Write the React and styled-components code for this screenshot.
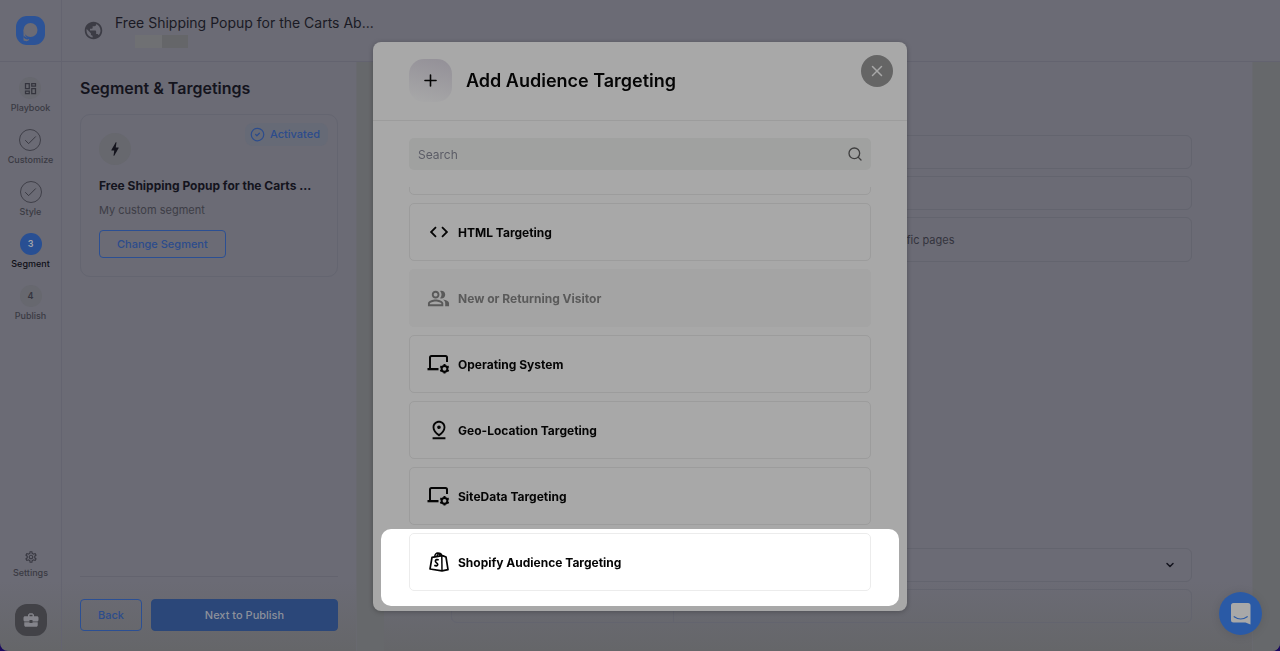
import React from 'react'
import styled, { createGlobalStyle } from 'styled-components'
import {
  MdBolt,
  MdBusinessCenter,
  MdCode,
  MdOutlineDashboard,
  MdOutlinePeopleAlt,
  MdOutlinePinDrop,
  MdOutlineSettings,
  MdPublic
} from 'react-icons/md'
import { Check, ChevronDown, CircleCheck, Plus, Search, X } from 'lucide-react'

const GlobalStyle = createGlobalStyle`
  * {
    box-sizing: border-box;
  }

  body {
    margin: 0;
    background: #1a0a5e;
    font-family: Inter, 'Liberation Sans', sans-serif;
    color: #14141d;
  }

  button, input, select {
    font-family: inherit;
  }
`

const Page = styled.div`
  display: grid;
  grid-template-columns: 62px 1fr;
  grid-template-rows: 62px 1fr;
  min-height: 100vh;
  background: linear-gradient(to bottom, #6b6b75 calc(100% - 70px), #656669 100%);
  border-radius: 0 0 8px 8px;
  overflow: hidden;
`

const LogoCell = styled.div`
  display: flex;
  align-items: center;
  justify-content: center;
  border-right: 1px solid #646470;
  border-bottom: 1px solid #63636f;
`

const Header = styled.header`
  display: flex;
  align-items: center;
  gap: 11px;
  padding: 0 21px;
  border-bottom: 1px solid #63636f;
  color: #3c3c45;
`

const HeaderText = styled.div`
  display: flex;
  flex-direction: column;
  gap: 2px;
`

const PageName = styled.div`
  font-size: 14px;
  line-height: 20px;
  color: #1a1a24;
`

const Domain = styled.div`
  width: 53px;
  height: 13px;
  margin-left: 20px;
  background: linear-gradient(to right, #6f7073 50%, #656669 50%);
`

const Rail = styled.nav`
  display: flex;
  flex-direction: column;
  align-items: center;
  gap: 15px;
  padding: 15px 0;
  border-right: 1px solid #646470;
`

const RailItem = styled.a`
  display: flex;
  flex-direction: column;
  align-items: center;
  gap: 3px;
  margin-top: ${props => (props.$last ? 'auto' : '0')};
  font-size: 9px;
  line-height: 12px;
  font-weight: 500;
  text-decoration: none;
  color: ${props => (props.$active ? '#0e0e16' : '#3a3a43')};
`

const Step = styled.span`
  display: flex;
  align-items: center;
  justify-content: center;
  width: 22px;
  height: 22px;
  border-radius: 50%;
  font-weight: 600;
  border: 1px solid ${props => (props.$done ? '#3f3f48' : 'transparent')};
  background: ${props => (props.$active ? '#284f93' : props.$soft ? '#67686f' : 'none')};
  color: ${props => (props.$active ? '#a3a5ab' : '#35353e')};
`

const HelpButton = styled.button`
  display: flex;
  align-items: center;
  justify-content: center;
  width: 32px;
  height: 32px;
  margin-top: 10px;
  padding: 0;
  border: 0;
  border-radius: 12px;
  background: #424247;
  color: #84848b;
`

const Body = styled.div`
  display: grid;
  grid-template-columns: 294px 28px 1fr 28px;
`

const Gutter = styled.div`
  background: #66686b;
  border-left: 1px solid #68696f;
`

const Sidebar = styled.aside`
  display: flex;
  flex-direction: column;
  padding: 16px 18px 20px;
`

const SidebarTitle = styled.h1`
  margin: 0 0 16px;
  font-size: 16px;
  line-height: 20px;
  font-weight: 600;
`

const SegmentCard = styled.section`
  display: flex;
  flex-direction: column;
  align-items: flex-start;
  padding: 8px 9px 18px 18px;
  border: 1px solid #646570;
  border-radius: 10px;
`

const CardTop = styled.div`
  display: flex;
  justify-content: space-between;
  align-items: flex-start;
  width: 100%;
`

const BoltCircle = styled.span`
  display: flex;
  align-items: center;
  justify-content: center;
  width: 32px;
  height: 32px;
  margin-top: 10px;
  border-radius: 50%;
  background: #67686e;
`

const Status = styled.span`
  display: flex;
  align-items: center;
  gap: 5px;
  padding: 0 8px 0 5px;
  border-radius: 8px;
  background: #666a76;
  color: #2c4c8c;
  font-size: 11px;
  line-height: 23px;
  font-weight: 500;
`

const CardTitle = styled.h2`
  margin: 12px 0 7px;
  font-size: 12px;
  line-height: 18px;
  font-weight: 700;
`

const CardText = styled.p`
  margin: 0 0 12px;
  font-size: 11px;
  line-height: 16px;
  color: #3d3d46;
`

const Button = styled.button`
  flex: ${props => (props.$grow ? '1' : 'none')};
  height: ${props => (props.$small ? '28px' : '32px')};
  padding: 0 17px;
  border: 1px solid ${props => (props.$primary ? '#2b4779' : '#2b4f93')};
  border-radius: 4px;
  background: ${props => (props.$primary ? '#2b4779' : 'none')};
  color: ${props => (props.$primary ? '#8d919b' : '#2c4c8c')};
  font-size: 11px;
  font-weight: 500;
`

const SidebarFooter = styled.div`
  display: flex;
  gap: 9px;
  margin-top: auto;
  padding-top: 22px;
  border-top: 1px solid #63636e;
`

const Main = styled.main`
  display: flex;
  flex-direction: column;
  gap: 7px;
  padding: 73px 60px 28px 67px;
`

const Field = styled.div`
  display: flex;
  align-items: center;
  height: ${props => (props.$tall ? '45px' : '34px')};
  border: 1px solid #63646e;
  border-radius: 6px;
`

const RuleText = styled.span`
  width: 68%;
  text-align: right;
  font-size: 11px;
  color: #33333d;
`

const SelectField = styled(Field)`
  margin-top: auto;
  padding-right: 15px;
`

const Select = styled.select`
  flex: 1;
  height: 100%;
  border: 0;
  background: none;
  appearance: none;
`

const FieldCell = styled.div`
  width: 30%;
  height: 100%;
  border-right: 1px solid #63646e;
`

const Overlay = styled.div`
  position: fixed;
  inset: 0;
  display: flex;
  align-items: center;
  justify-content: center;
  padding-top: 2px;
`

const Modal = styled.div`
  position: relative;
  display: flex;
  flex-direction: column;
  width: 534px;
  height: calc(100vh - 82px);
  border-radius: 8px;
  background: #a8a8a8;
  color: #050505;
  box-shadow: 0 1px 5px rgba(0, 0, 0, 0.25);
  overflow: hidden;
`

const ModalHeader = styled.div`
  display: flex;
  align-items: center;
  gap: 14px;
  padding: 17px 36px 18px;
  border-bottom: 1px solid #9c9c9c;
`

const PlusTile = styled.span`
  display: flex;
  align-items: center;
  justify-content: center;
  width: 43px;
  height: 43px;
  border-radius: 15px;
  background: linear-gradient(15deg, #a6a6a7 10%, #959299 90%);
`

const ModalTitle = styled.h2`
  margin: 0;
  font-size: 18px;
  line-height: 24px;
  font-weight: 600;
`

const CloseButton = styled.button`
  position: absolute;
  top: 13px;
  right: 14px;
  display: flex;
  align-items: center;
  justify-content: center;
  width: 32px;
  height: 32px;
  padding: 0;
  border: 0;
  border-radius: 50%;
  background: #656565;
  color: #a8a8a8;
`

const SearchBox = styled.label`
  display: flex;
  align-items: center;
  height: 32px;
  margin: 17px 36px;
  padding: 0 8px 0 9px;
  border-radius: 5px;
  background: #a0a1a0;
  color: #3f3f3f;
`

const SearchInput = styled.input`
  flex: 1;
  padding: 0;
  border: 0;
  outline: 0;
  background: none;
  font-size: 12px;

  &::placeholder {
    color: #5b5c66;
    opacity: 1;
  }
`

const TargetList = styled.ul`
  display: flex;
  flex: 1;
  flex-direction: column;
  justify-content: flex-end;
  gap: 8px;
  margin: 0;
  padding: 0 36px 5px;
  min-height: 0;
  overflow: hidden;
  list-style: none;
`

const TargetItem = styled.li`
  flex: none;
  ${props => props.$spotlight && `
    margin: -4px -28px 0;
    padding: 4px 28px 15px;
    border-radius: 10px;
    background: #fff;
  `}
`

const TargetButton = styled.button`
  display: flex;
  align-items: center;
  gap: 8px;
  width: 100%;
  height: 58px;
  padding: 0 17px;
  border: 1px solid ${props => (props.$spotlight ? '#ececec' : '#9c9c9c')};
  border-radius: 5px;
  background: none;
  color: #050505;
  font-size: 12px;
  font-weight: 700;
  text-align: left;

  &:disabled {
    border-color: #a4a4a4;
    background: #a4a4a4;
    color: #5a5a5a;
  }
`

const IconSlot = styled.span`
  display: flex;
  align-items: center;
  justify-content: center;
  width: 23px;
`

const ChatButton = styled.button`
  position: fixed;
  right: 18px;
  bottom: 16px;
  display: flex;
  align-items: center;
  justify-content: center;
  width: 43px;
  height: 43px;
  padding: 0;
  border: 0;
  border-radius: 50%;
  background: #2a5aa6;
  box-shadow: 0 1px 10px rgba(0, 0, 0, 0.1);
`

const Logo = () => (
  <svg width="29" height="29" viewBox="0 0 29 29" aria-hidden="true">
    <rect width="29" height="29" rx="11" fill="#2c5397" />
    <circle cx="14.5" cy="14" r="7" fill="#6b6b75" />
    <path d="M7.5 13v11.5l3 .8c1-.3 2-.8 2.8-1.500L9.500 20z" fill="#6b6b75" />
    <path d="M7.5 19.5c1.500 1.600 3.500 2.500 5.800 2.700l-1.500 1.400c-2-.3-3.500-1.300-4.300-2.400z" fill="#2c5397" />
  </svg>
)

const LaptopGear = () => (
  <svg width="23" height="20" viewBox="0 0 23 20" aria-hidden="true">
    <path d="M3 14V3.500Q3 2 4.500 2H18.500Q20 2 20 3.500V8" fill="none" stroke="currentColor" strokeWidth="2" />
    <path d="M.5 14h11v2.300H.5z" fill="currentColor" />
    <circle cx="17.500" cy="14.800" r="2.900" fill="none" stroke="currentColor" strokeWidth="2" />
    <path
      d="M17.500 10v1.800M17.500 17.800v1.800M13.300 12.400l1.600.9M20.100 16.300l1.600.9M13.300 17.200l1.600-.9M20.100 13.300l1.600-.9"
      stroke="currentColor"
      strokeWidth="2"
    />
  </svg>
)

const ShopifyBag = () => (
  <svg width="20" height="20" viewBox="0 0 20 20" fill="none" stroke="currentColor" aria-hidden="true">
    <path d="M3 5.300 13.500 3.600 17 5l2 12.600-6 1.300L1 17z" strokeWidth="1.700" strokeLinejoin="round" />
    <path d="M12.800 3.800 13 18.700" strokeWidth="1.500" />
    <path d="M5.600 5C6 2.500 7.500 1 9 1.100c1.300.1 2 1.300 2.100 2.900M8 4.500C8.500 2.200 10 1 11.300 1.400c.8.300 1.300 1.100 1.400 2.300" strokeWidth="1.500" />
    <path d="M9.700 7.900C8.300 7.200 6.500 7.600 6.400 9.100c-.1 1.700 2.500 1.800 2.300 3.500-.2 1.500-1.900 1.600-3.400.7" strokeWidth="1.700" />
  </svg>
)

const ChatIcon = () => (
  <svg width="20" height="22" viewBox="0 0 20 22" aria-hidden="true">
    <path d="M2.500 0h14.500Q19.500 0 19.500 2.500V21.500L14.500 19.500H2.500Q0 19.500 0 17V2.500Q0 0 2.500 0z" fill="#a8a8a8" />
    <path d="M3.200 13.700q6.500 4.600 13 0" fill="none" stroke="#2a5aa6" strokeWidth="1.200" strokeLinecap="round" />
  </svg>
)

const steps = [
  { label: 'Playbook', icon: <MdOutlineDashboard size={15} />, soft: true },
  { label: 'Customize', icon: <Check size={15} strokeWidth={1.5} />, done: true },
  { label: 'Style', icon: <Check size={15} strokeWidth={1.5} />, done: true },
  { label: 'Segment', icon: '3', active: true },
  { label: 'Publish', icon: '4', soft: true }
]

const targets = [
  { name: 'HTML Targeting', icon: <MdCode size={22} /> },
  { name: 'New or Returning Visitor', icon: <MdOutlinePeopleAlt size={23} />, disabled: true },
  { name: 'Operating System', icon: <LaptopGear /> },
  { name: 'Geo-Location Targeting', icon: <MdOutlinePinDrop size={22} /> },
  { name: 'SiteData Targeting', icon: <LaptopGear /> },
  { name: 'Shopify Audience Targeting', icon: <ShopifyBag />, spotlight: true }
]

const App = () => {
  return (
    <>
      <GlobalStyle />
      <Page>
        <LogoCell><Logo /></LogoCell>
        <Header>
          <MdPublic size={21} />
          <HeaderText>
            <PageName>Free Shipping Popup for the Carts Ab...</PageName>
            <Domain />
          </HeaderText>
        </Header>
        <Rail>
          {steps.map(({ label, icon, done, active, soft }) => (
            <RailItem href="#" key={label} $active={active}>
              <Step $done={done} $active={active} $soft={soft}>{icon}</Step>
              {label}
            </RailItem>
          ))}
          <RailItem href="#" $last>
            <MdOutlineSettings size={14} />
            Settings
          </RailItem>
          <HelpButton aria-label="Toolbox"><MdBusinessCenter size={18} /></HelpButton>
        </Rail>
        <Body>
          <Sidebar>
            <SidebarTitle>Segment &amp; Targetings</SidebarTitle>
            <SegmentCard>
              <CardTop>
                <BoltCircle><MdBolt size={18} /></BoltCircle>
                <Status><CircleCheck size={15} strokeWidth={2} /> Activated</Status>
              </CardTop>
              <CardTitle>Free Shipping Popup for the Carts ...</CardTitle>
              <CardText>My custom segment</CardText>
              <Button $small>Change Segment</Button>
            </SegmentCard>
            <SidebarFooter>
              <Button>Back</Button>
              <Button $primary $grow>Next to Publish</Button>
            </SidebarFooter>
          </Sidebar>
          <Gutter />
          <Main>
            <Field />
            <Field />
            <Field $tall><RuleText>specific pages</RuleText></Field>
            <SelectField>
              <Select aria-label="Condition" />
              <ChevronDown size={12} strokeWidth={3} />
            </SelectField>
            <Field><FieldCell /></Field>
          </Main>
          <Gutter />
        </Body>
      </Page>
      <Overlay>
        <Modal role="dialog" aria-labelledby="modal-title">
          <ModalHeader>
            <PlusTile><Plus size={19} strokeWidth={2} /></PlusTile>
            <ModalTitle id="modal-title">Add Audience Targeting</ModalTitle>
          </ModalHeader>
          <CloseButton aria-label="Close"><X size={18} strokeWidth={2} /></CloseButton>
          <SearchBox>
            <SearchInput type="text" placeholder="Search" aria-label="Search" />
            <Search size={16} strokeWidth={2} />
          </SearchBox>
          <TargetList>
            <TargetItem><TargetButton as="div" /></TargetItem>
            {targets.map(({ name, icon, disabled, spotlight }) => (
              <TargetItem key={name} $spotlight={spotlight}>
                <TargetButton disabled={disabled} $spotlight={spotlight}>
                  <IconSlot>{icon}</IconSlot>
                  {name}
                </TargetButton>
              </TargetItem>
            ))}
          </TargetList>
        </Modal>
      </Overlay>
      <ChatButton aria-label="Open chat"><ChatIcon /></ChatButton>
    </>
  )
}

export default App
